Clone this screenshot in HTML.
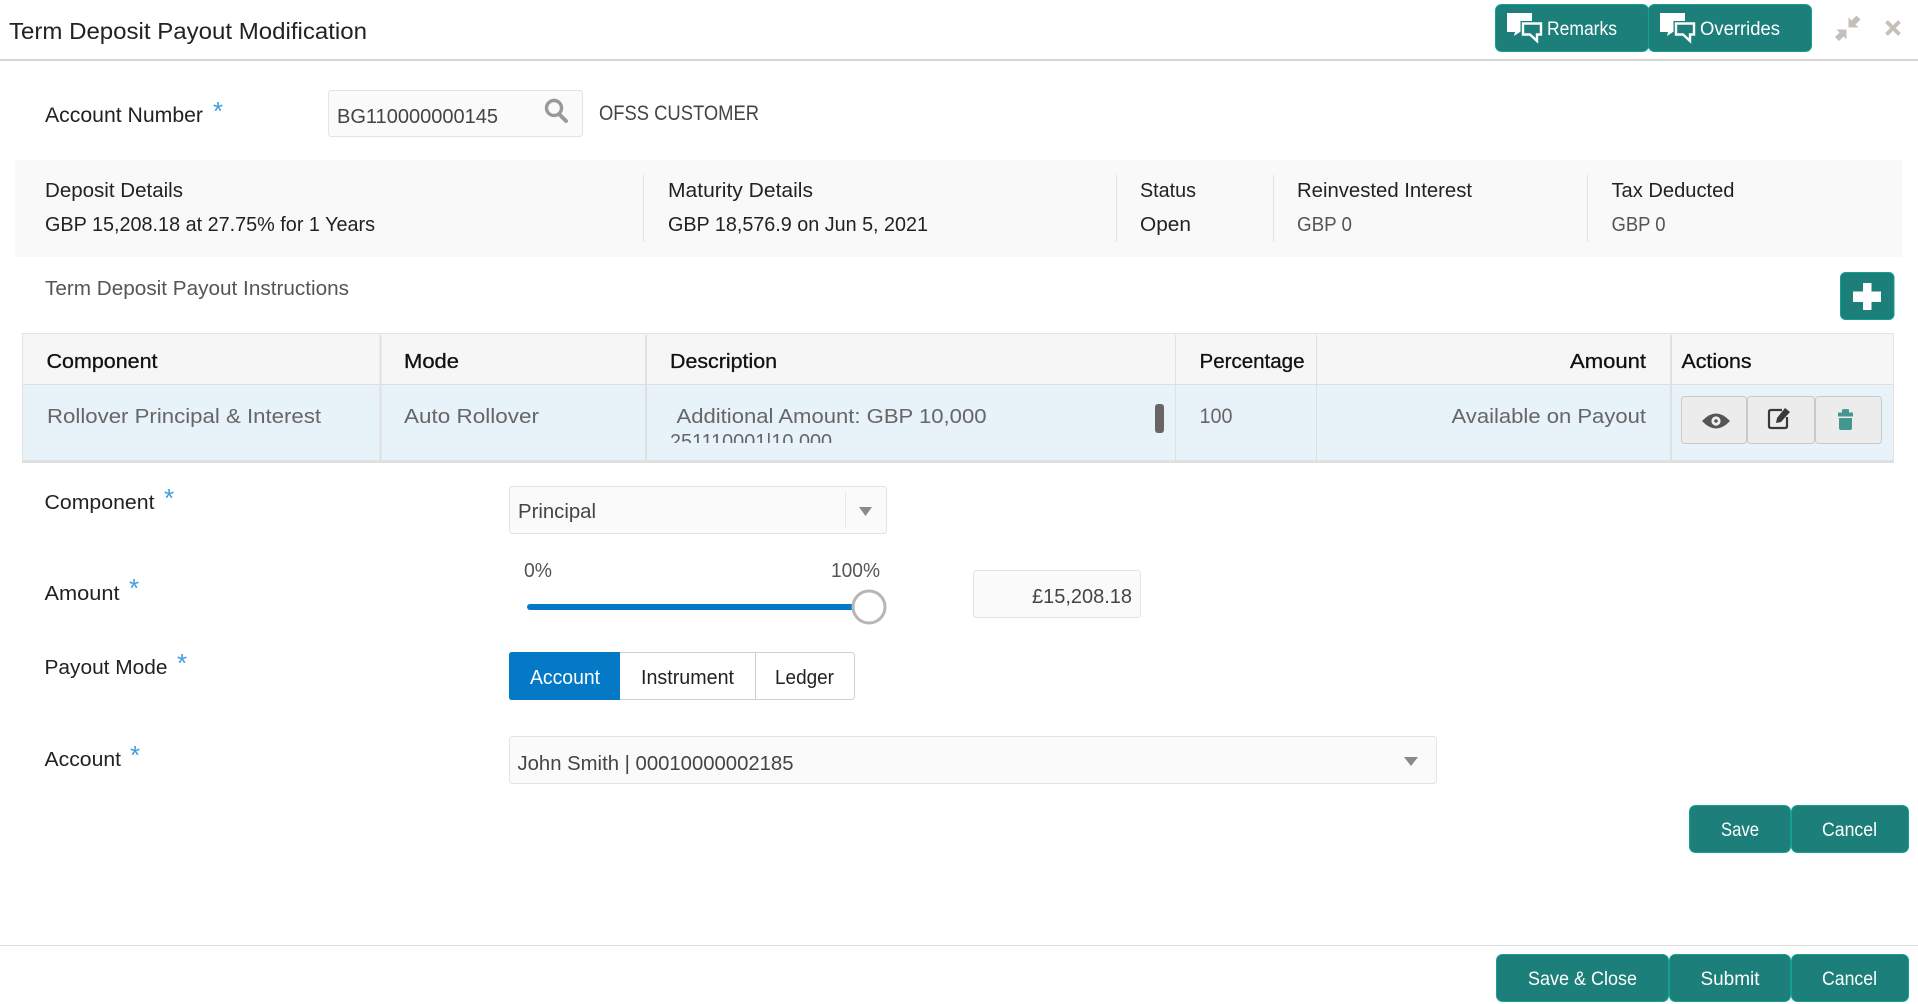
<!DOCTYPE html>
<html lang="en">
<head>
<meta charset="utf-8">
<title>Term Deposit Payout Modification</title>
<style>
html,body{margin:0;padding:0;background:#fff;width:1918px;height:1004px;overflow:hidden}
svg{display:block;position:absolute;left:0;top:0}
text{font-family:"Liberation Sans",sans-serif;font-size:20.5px;fill:#444}
.d{fill:#222}
.m{fill:#555}
.h{fill:#111;stroke:#111;stroke-width:.3}
.r{fill:#666}
.w{fill:#fff;font-size:19.5px}
.a{fill:#3f9fdd;font-size:26px}
.b{fill:#1c7f7a;stroke:#12a193;stroke-width:1}
.f{fill:#fafafa;stroke:#e4e4e4;stroke-width:1}
.g{fill:#ececec;stroke:#c9c9c9;stroke-width:1}
.l{fill:#e2e2e2}
</style>
</head>
<body>
<svg width="1918" height="1004" viewBox="0 0 1918 1004" xmlns="http://www.w3.org/2000/svg">
<defs>
<clipPath id="desc"><rect x="650" y="400" width="490" height="43"/></clipPath>
<g id="bub">
<path d="M12 13H37V32H25L19 36L20 32H12Z" fill="#fff"/>
<path d="M28 23.500H46V34.500H42V41L35 34.500H28Z" fill="#1c7f7a" stroke="#1c7f7a" stroke-width="5"/>
<path d="M28 23.500H46V34.500H42V41L35 34.500H28Z" fill="#1c7f7a" stroke="#fff" stroke-width="2.400"/>
</g>
</defs>

<!-- header -->
<text x="9" y="39" class="d" style="font-size:23.500px" textLength="358" lengthAdjust="spacingAndGlyphs">Term Deposit Payout Modification</text>
<rect x="1495.500" y="4.500" width="153" height="47" rx="6" class="b"/>
<rect x="1648.500" y="4.500" width="163" height="47" rx="6" class="b"/>
<use href="#bub" x="1495"/>
<use href="#bub" x="1648"/>
<text x="1547" y="35" class="w" textLength="70" lengthAdjust="spacingAndGlyphs">Remarks</text>
<text x="1700" y="35" class="w" textLength="80" lengthAdjust="spacingAndGlyphs">Overrides</text>
<g fill="#c4bfb8">
<path d="M1846.500 29.500V39.500L1843.500 36.500L1839 41L1835 37L1839.500 32.500L1836.500 29.500Z"/>
<path d="M1848.500 27.500V17.500L1851.500 20.500L1856.500 15.500L1860.500 19.500L1855.500 24.500L1858.500 27.500Z"/>
</g>
<path d="M1886.500 21.500L1899.500 34.500M1899.500 21.500L1886.500 34.500" stroke="#c4bfb8" stroke-width="3.800" fill="none"/>
<rect x="0" y="59" width="1918" height="2" fill="#d6d6d6"/>

<!-- account -->
<text x="45" y="122" class="d" style="font-size:21px" textLength="158" lengthAdjust="spacingAndGlyphs">Account Number</text>
<text x="213" y="120" class="a">*</text>
<rect x="328.500" y="90.500" width="254" height="46" rx="3" class="f"/>
<text x="337" y="123" textLength="161" lengthAdjust="spacingAndGlyphs">BG110000000145</text>
<circle cx="554" cy="108" r="7.500" fill="none" stroke="#999" stroke-width="3.400"/>
<path d="M559 114L566 121" stroke="#999" stroke-width="4" stroke-linecap="round"/>
<text x="599" y="120" style="font-size:21px" textLength="160" lengthAdjust="spacingAndGlyphs">OFSS CUSTOMER</text>

<!-- summary band -->
<rect x="15" y="160" width="1887" height="97" fill="#f9f9f9"/>
<rect x="643" y="175" width="1" height="67" class="l"/>
<rect x="1116" y="175" width="1" height="67" class="l"/>
<rect x="1273" y="175" width="1" height="67" class="l"/>
<rect x="1587" y="175" width="1" height="67" class="l"/>
<text x="45" y="197" class="d" textLength="138" lengthAdjust="spacingAndGlyphs">Deposit Details</text>
<text x="45" y="231" class="d" textLength="330" lengthAdjust="spacingAndGlyphs">GBP 15,208.18 at 27.75% for 1 Years</text>
<text x="668" y="197" class="d" textLength="145" lengthAdjust="spacingAndGlyphs">Maturity Details</text>
<text x="668" y="231" class="d" textLength="260" lengthAdjust="spacingAndGlyphs">GBP 18,576.9 on Jun 5, 2021</text>
<text x="1140" y="197" class="d" textLength="56" lengthAdjust="spacingAndGlyphs">Status</text>
<text x="1140" y="231" class="d" textLength="51" lengthAdjust="spacingAndGlyphs">Open</text>
<text x="1297" y="197" class="d" textLength="175" lengthAdjust="spacingAndGlyphs">Reinvested Interest</text>
<text x="1297" y="231" class="m" textLength="55" lengthAdjust="spacingAndGlyphs">GBP 0</text>
<text x="1611.500" y="197" class="d" textLength="123" lengthAdjust="spacingAndGlyphs">Tax Deducted</text>
<text x="1611.500" y="231" class="m" textLength="54" lengthAdjust="spacingAndGlyphs">GBP 0</text>

<!-- instructions -->
<text x="45" y="295" class="m" textLength="304" lengthAdjust="spacingAndGlyphs">Term Deposit Payout Instructions</text>
<rect x="1840.500" y="272.500" width="53.500" height="47" rx="5" class="b"/>
<path d="M1863 283H1871.500V291.500H1881V302H1871.500V310H1863V302H1853V291.500H1863Z" fill="#fff"/>

<!-- table -->
<rect x="22.500" y="333.500" width="1871" height="129" fill="#f6f6f6" stroke="#e2e2e2"/>
<rect x="23" y="385" width="1870" height="75" fill="#e7f2f9"/>
<rect x="23" y="384" width="1870" height="1" fill="#dedede"/>
<rect x="22" y="460" width="1872" height="3" fill="#dfe0e0"/>
<rect x="379.500" y="335" width="2" height="125" fill="#e0e0e0"/>
<rect x="645" y="335" width="2" height="125" fill="#e0e0e0"/>
<rect x="1175" y="335" width="1" height="125" fill="#e0e0e0"/>
<rect x="1316" y="335" width="1" height="125" fill="#e0e0e0"/>
<rect x="1670" y="335" width="2" height="125" fill="#e0e0e0"/>
<text x="46.500" y="368" class="h" textLength="111" lengthAdjust="spacingAndGlyphs">Component</text>
<text x="404" y="368" class="h" textLength="55" lengthAdjust="spacingAndGlyphs">Mode</text>
<text x="670" y="368" class="h" textLength="107" lengthAdjust="spacingAndGlyphs">Description</text>
<text x="1199.500" y="368" class="h" textLength="105" lengthAdjust="spacingAndGlyphs">Percentage</text>
<text x="1570" y="368" class="h" textLength="76" lengthAdjust="spacingAndGlyphs">Amount</text>
<text x="1681.500" y="368" class="h" textLength="70" lengthAdjust="spacingAndGlyphs">Actions</text>
<text x="47" y="423" class="r" textLength="274" lengthAdjust="spacingAndGlyphs">Rollover Principal &amp; Interest</text>
<text x="404" y="423" class="r" textLength="135" lengthAdjust="spacingAndGlyphs">Auto Rollover</text>
<text x="676.500" y="423" class="r" textLength="310" lengthAdjust="spacingAndGlyphs">Additional Amount: GBP 10,000</text>
<g clip-path="url(#desc)"><text x="670" y="448" class="r" textLength="162" lengthAdjust="spacingAndGlyphs">251110001|10,000</text></g>
<rect x="1155" y="404" width="9" height="29" rx="3" fill="#6b6464"/>
<text x="1199.500" y="423" class="r" style="font-size:21px" textLength="33" lengthAdjust="spacingAndGlyphs">100</text>
<text x="1451.500" y="423" class="r" textLength="194.500" lengthAdjust="spacingAndGlyphs">Available on Payout</text>
<rect x="1681.500" y="396.500" width="65" height="47" rx="3" class="g"/>
<rect x="1747.500" y="396.500" width="67" height="47" rx="3" class="g"/>
<rect x="1815.500" y="396.500" width="66" height="47" rx="3" class="g"/>
<path d="M1702 421Q1716 406 1730 421Q1716 436 1702 421Z" fill="#555"/>
<circle cx="1716" cy="421" r="4.600" fill="#eee"/>
<circle cx="1716" cy="421" r="1.800" fill="#555"/>
<path d="M1782 410H1771Q1769 410 1769 412V426Q1769 428 1771 428H1785Q1787 428 1787 426V417" fill="none" stroke="#3a3a3a" stroke-width="2.200"/>
<path d="M1776 423L1777 418L1785 408L1790 412L1781 422Z" fill="#3a3a3a"/>
<path d="M1838 416.500V412.500H1842V409.500Q1845.500 408.500 1849 409.500V412.500H1853V416.500Z" fill="#459590"/>
<path d="M1839 418H1852V428Q1852 430 1850 430H1841Q1839 430 1839 428Z" fill="#459590"/>

<!-- form: component -->
<text x="44.500" y="509" class="d" textLength="110" lengthAdjust="spacingAndGlyphs">Component</text>
<text x="164" y="507" class="a">*</text>
<rect x="509.500" y="486.500" width="377" height="47" rx="3" class="f"/>
<rect x="845" y="492" width="1" height="36" fill="#e8e8e8"/>
<text x="518" y="518" textLength="78" lengthAdjust="spacingAndGlyphs">Principal</text>
<path d="M859 507H872L865.500 516Z" fill="#8a8a8e"/>

<!-- form: amount -->
<text x="44.500" y="600" class="d" textLength="75" lengthAdjust="spacingAndGlyphs">Amount</text>
<text x="129" y="597" class="a">*</text>
<text x="524" y="577" class="m" textLength="28" lengthAdjust="spacingAndGlyphs">0%</text>
<text x="831" y="577" class="m" textLength="49" lengthAdjust="spacingAndGlyphs">100%</text>
<rect x="527" y="604" width="330" height="6" rx="3" fill="#0479c6"/>
<circle cx="869" cy="607" r="16" fill="#fff" stroke="#b6b6b6" stroke-width="3"/>
<rect x="973.500" y="570.500" width="167" height="47" rx="3" class="f"/>
<text x="1032" y="603" textLength="100" lengthAdjust="spacingAndGlyphs">£15,208.18</text>

<!-- form: payout mode -->
<text x="44.500" y="674" class="d" textLength="123" lengthAdjust="spacingAndGlyphs">Payout Mode</text>
<text x="177" y="672" class="a">*</text>
<rect x="509.500" y="652.500" width="345" height="47" rx="3" fill="#fff" stroke="#cfcfcf"/>
<rect x="755" y="653" width="1" height="46" fill="#cfcfcf"/>
<path d="M512 652H620V700H512Q509 700 509 697V655Q509 652 512 652Z" fill="#0479c6"/>
<text x="530" y="684" style="fill:#fff" textLength="70" lengthAdjust="spacingAndGlyphs">Account</text>
<text x="641" y="684" class="d" textLength="93" lengthAdjust="spacingAndGlyphs">Instrument</text>
<text x="775" y="684" class="d" textLength="59" lengthAdjust="spacingAndGlyphs">Ledger</text>

<!-- form: account -->
<text x="44.500" y="766" class="d" textLength="76.500" lengthAdjust="spacingAndGlyphs">Account</text>
<text x="130" y="764" class="a">*</text>
<rect x="509.500" y="736.500" width="927" height="47" rx="3" class="f"/>
<text x="517.500" y="770" textLength="276" lengthAdjust="spacingAndGlyphs">John Smith | 00010000002185</text>
<path d="M1404 757H1418L1411 766Z" fill="#8a8a8e"/>

<!-- form buttons -->
<rect x="1689.500" y="805.500" width="101" height="47" rx="6" class="b"/>
<rect x="1791.500" y="805.500" width="117" height="47" rx="6" class="b"/>
<text x="1721" y="836" class="w" textLength="38" lengthAdjust="spacingAndGlyphs">Save</text>
<text x="1822" y="836" class="w" textLength="55" lengthAdjust="spacingAndGlyphs">Cancel</text>

<!-- footer -->
<rect x="0" y="945" width="1918" height="1" fill="#e0e0e0"/>
<rect x="1496.500" y="954.500" width="172" height="47" rx="6" class="b"/>
<rect x="1669.500" y="954.500" width="121" height="47" rx="6" class="b"/>
<rect x="1791.500" y="954.500" width="117" height="47" rx="6" class="b"/>
<text x="1528" y="985" class="w" textLength="109" lengthAdjust="spacingAndGlyphs">Save &amp; Close</text>
<text x="1700.500" y="985" class="w" textLength="59" lengthAdjust="spacingAndGlyphs">Submit</text>
<text x="1822" y="985" class="w" textLength="55" lengthAdjust="spacingAndGlyphs">Cancel</text>
</svg>
</body>
</html>
